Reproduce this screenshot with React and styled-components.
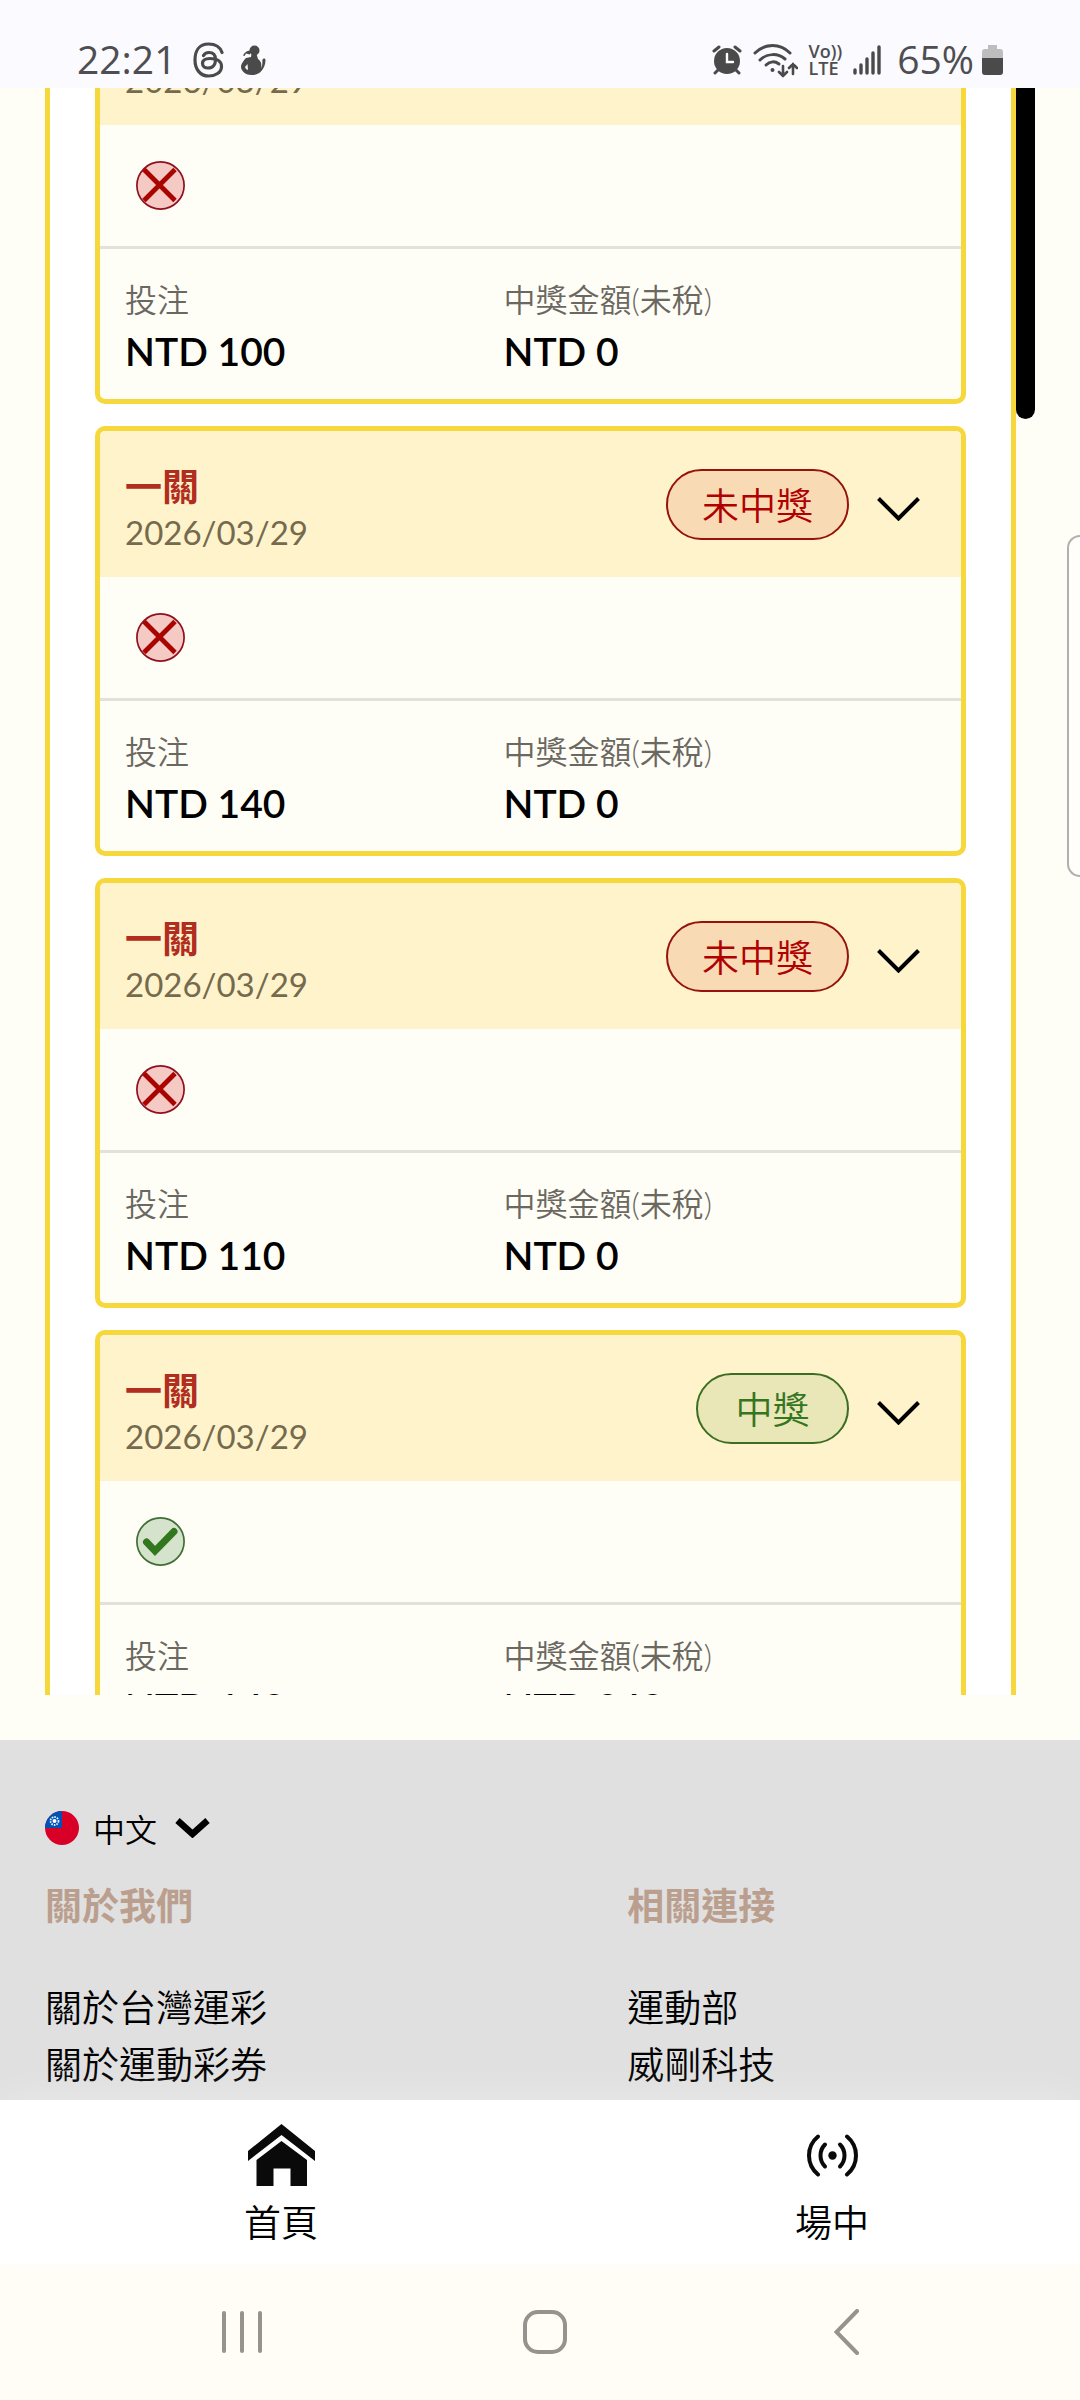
import React, { useLayoutEffect, useRef } from "react";
import styled, { createGlobalStyle } from "styled-components";

const GlobalStyle = createGlobalStyle`
  * { box-sizing: border-box; }
  body {
    margin: 0;
    background: #fffef6;
    color: #000;
    font-family: Lato, "Noto Sans CJK TC", sans-serif;
    font-weight: 400;
  }
  button {
    border: 0;
    padding: 0;
    background: none;
    color: inherit;
    font: inherit;
  }
  a { color: inherit; text-decoration: none; }
  svg { display: block; flex: none; }
`;

const Screen = styled.div`
  position: relative;
  display: flex;
  flex-direction: column;
  height: 100vh;
  overflow: hidden;
`;

/* ---------- status bar ---------- */

const StatusBar = styled.header`
  display: flex;
  justify-content: space-between;
  height: 88px;
  padding: 40px 77px 8px 77px;
  background: #fafaff;
  color: #4e4e50;
  font-family: "Open Sans", sans-serif;
  font-size: 39px;
  font-weight: 400;
  line-height: 40px;
`;

const StatusGroup = styled.div`
  display: flex;
  align-items: center;
  gap: ${(p) => p.$gap}px;
`;

const StatusText = styled.span`
  padding-bottom: 2px;
`;

const VoLte = styled.span`
  display: flex;
  flex-direction: column;
  font-size: 18px;
  font-weight: 600;
  line-height: 17px;
`;

const BatteryLevel = styled.span`
  display: flex;
  align-items: center;
  gap: 8px;
  margin-left: 5px;
`;

/* ---------- bet list ---------- */

const Main = styled.main`
  display: flex;
  flex: 1;
  min-height: 0;
  padding: 0 45px 45px;
`;

const Scroller = styled.div`
  flex: 1;
  overflow: hidden;
`;

const Frame = styled.div`
  display: flex;
  flex-direction: column;
  gap: 22px;
  padding: 45px;
  border: 5px solid #f6d73c;
  background: #fff;
`;

const Track = styled.div`
  width: 19px;
`;

const Thumb = styled.div`
  height: 331px;
  border-radius: 0 0 10px 10px;
  background: #000;
`;

const Card = styled.article`
  border: 5px solid #f6d73c;
  border-radius: 10px;
  background: #fffef6;
  overflow: hidden;
`;

const CardHeader = styled.div`
  display: flex;
  align-items: center;
  height: 146px;
  padding: 0 41px 0 25px;
  background: #fff3cc;
`;

const CardHeading = styled.div`
  flex: 1;
  padding-top: 10px;
`;

const CardTitle = styled.h2`
  margin: 0;
  color: #b12d20;
  font-size: 37px;
  font-weight: 700;
  line-height: 46px;
`;

const CardDate = styled.div`
  color: #756a4c;
  font-size: 33px;
  line-height: 44px;
`;

const Badge = styled.span`
  min-width: 153px;
  height: 71px;
  padding: 0 34px;
  border: 2px solid ${(p) => (p.$won ? "#3b6e22" : "#96120a")};
  border-radius: 36px;
  background: ${(p) => (p.$won ? "#e9e6b8" : "#f8dab5")};
  color: ${(p) => (p.$won ? "#35751f" : "#b00000")};
  font-size: 37px;
  font-weight: 350;
  line-height: 70px;
  text-align: center;
`;

const ExpandButton = styled.button`
  margin-left: 28px;
  padding-top: 10px;
`;

const ResultRow = styled.div`
  display: flex;
  align-items: center;
  height: 121px;
  padding: 0 36px;
`;

const Amounts = styled.dl`
  display: grid;
  grid-template-columns: 7fr 8fr;
  margin: 0;
  height: 153px;
  padding: 27px 25px 0;
  border-top: 3px solid #e4e1db;
`;

const AmountLabel = styled.dt`
  color: #6b6862;
  font-size: 32px;
  font-weight: 350;
  line-height: 48px;
`;

const AmountValue = styled.dd`
  margin: 0;
  font-size: 39px;
  font-weight: 600;
  line-height: 54px;
`;

/* ---------- footer ---------- */

const Footer = styled.footer`
  height: 360px;
  padding: 64px 0 0 45px;
  background: #e0e0e0;
  overflow: hidden;
`;

const LanguageButton = styled.button`
  display: flex;
  align-items: center;
  height: 48px;
  font-size: 32px;
  font-weight: 350;
  line-height: 48px;
`;

const LanguageName = styled.span`
  margin: 0 18px 0 14px;
  padding-top: 3px;
`;

const FooterColumns = styled.div`
  display: grid;
  grid-template-columns: 9fr 7fr;
  padding-top: 25px;
`;

const FooterTitle = styled.h3`
  margin: 0 0 45px;
  color: #bb9f8e;
  font-size: 37px;
  font-weight: 700;
  line-height: 57px;
`;

const FooterLink = styled.a`
  display: block;
  font-size: 37px;
  font-weight: 350;
  line-height: 57px;
`;

/* ---------- bottom bars ---------- */

const TabBar = styled.nav`
  display: flex;
  justify-content: space-between;
  height: 164px;
  padding: 18px 211px 0 244px;
  background: #fff;
  box-shadow: 0 0 40px rgba(255, 255, 255, 0.35);
  z-index: 1;
`;

const Tab = styled.a`
  display: flex;
  flex-direction: column;
  align-items: center;
  gap: 4px;
  font-size: 37px;
  font-weight: 350;
  line-height: 54px;
`;

const TabIcon = styled.span`
  display: flex;
  align-items: center;
  height: 74px;
`;

const SystemBar = styled.nav`
  display: flex;
  align-items: center;
  justify-content: space-between;
  height: 136px;
  padding: 0 203px 0 212px;
  background: #fffdf6;
`;

const SystemButton = styled.button`
  display: flex;
  align-items: center;
  justify-content: center;
  width: 60px;
  height: 60px;
`;

const EdgeHandle = styled.div`
  position: absolute;
  top: 535px;
  right: 0;
  width: 13px;
  height: 342px;
  border: 2px solid #b0b0ae;
  border-right: 0;
  border-radius: 14px 0 0 14px;
  background: #fffefa;
`;

/* ---------- drawings ---------- */

const ThreadsIcon = () => (
  <svg width="31" height="36" viewBox="0 0 31 36" fill="none" stroke="#4a4a4b" strokeWidth="3.200" strokeLinecap="round">
    <path d="M29 10.500C27 4.500 21.500 2 15.500 2 6 2 2 9 2 18s5 16 13.500 16c7 0 13-3.500 13-9.500 0-6-6-8-11.500-8-5 0-7.500 2-7.500 5 0 3 2.500 4.500 5.500 4.500 5 0 7.500-3.500 7.500-8.500 0-4.500-2.500-7-6.500-7-3 0-4.500 1-5.500 3" />
  </svg>
);

const FigureIcon = () => (
  <svg width="25" height="31" viewBox="0 0 25 31" fill="#4a4a4b">
    <circle cx="13.500" cy="5.500" r="5" />
    <path d="M10.500 9h5l1.500 5c3 2 4 5 3 9 2-2 1-6 1.500-8.500 1-1.500 3-1 3 .500 0 5-2 9-5 12-4 4-14 4-17 0-1.500-2-2.500-3-2.500-5 0-3 3-7 5-9l5-1z" />
    <path d="M2 10.500c2-4 5-5 8-5l-1 4-4-1-1.500 2.500z" />
    <path d="M4 22l2.500-3 .500 6-2-1z" fill="#fafaff" />
  </svg>
);

const AlarmIcon = () => (
  <svg width="30" height="30" viewBox="0 0 30 30" fill="none" stroke="#4a4a4b" strokeLinecap="round">
    <circle cx="15" cy="16" r="13" fill="#4a4a4b" stroke="none" />
    <path d="M2 6l5-4M28 6l-5-4M6 25l-3 3M24 25l3 3" strokeWidth="3" />
    <path d="M15 9v8h6" stroke="#fff" strokeWidth="2.400" />
  </svg>
);

const WifiIcon = () => (
  <svg width="45" height="35" viewBox="0 0 45 35" fill="none" stroke="#4a4a4b" strokeWidth="3" strokeLinecap="round">
    <path d="M2 10C12 0 27 0 37 10" />
    <path d="M7 17c7-7 18-7 25-1" />
    <path d="M13 22c4-4 9-4 13-1" />
    <circle cx="19.500" cy="27" r="2" fill="#4a4a4b" stroke="none" />
    <path d="M30 23v10M26 29l4 4 4-4M40 31V21M36 25l4-4 4 4" strokeWidth="2.600" />
  </svg>
);

const SignalIcon = () => (
  <svg width="28" height="30" viewBox="0 0 28 30" stroke="#4a4a4b" strokeWidth="3.400" strokeLinecap="round">
    <path d="M2 25v3M8 20v8M14 14v14M20 8v20M26 2v26" />
  </svg>
);

const BatteryIcon = () => (
  <svg width="21" height="32" viewBox="0 0 21 32">
    <path d="M6 1h9v4h3a3 3 0 0 1 3 3v7H0V8a3 3 0 0 1 3-3h3z" fill="#bdbdbf" />
    <path d="M0 14h21v14a3 3 0 0 1-3 3H3a3 3 0 0 1-3-3z" fill="#4a4a4b" />
  </svg>
);

const CrossMark = () => (
  <svg width="49" height="49" viewBox="0 0 49 49" role="img" aria-label="未中獎">
    <circle cx="24.500" cy="24.500" r="23.600" fill="#f5c9c4" stroke="#8f1020" strokeWidth="1.700" />
    <path d="M8 8.500l31 31M39 8.500L8 39.500" stroke="#a90400" strokeWidth="4.800" />
  </svg>
);

const CheckMark = () => (
  <svg width="49" height="49" viewBox="0 0 49 49" role="img" aria-label="中獎">
    <circle cx="24.500" cy="24.500" r="23.600" fill="#d5e2cc" stroke="#3f6f35" strokeWidth="1.700" />
    <path d="M10.500 25L19 34L38 14.500" fill="none" stroke="#32761d" strokeWidth="7" strokeLinecap="round" />
  </svg>
);

const ThinChevron = () => (
  <svg width="43" height="24" viewBox="0 0 43 24" fill="none" stroke="#000" strokeWidth="4">
    <path d="M1.500 1.500l20 20 20-20" />
  </svg>
);

const BoldChevron = () => (
  <svg width="35" height="20" viewBox="0 0 35 20" fill="none" stroke="#000" strokeWidth="6.500">
    <path d="M2.500 2.500L17.500 16l15-13.500" />
  </svg>
);

const FlagIcon = () => (
  <svg width="34" height="34" viewBox="0 0 34 34">
    <circle cx="17" cy="17" r="17" fill="#d80027" />
    <path d="M17 0A17 17 0 0 0 0 17h17z" fill="#0052b4" />
    <circle cx="9.500" cy="10" r="4" fill="none" stroke="#e8eefb" strokeWidth="1.800" strokeDasharray="1.600 1" />
    <circle cx="9.500" cy="10" r="2" fill="#fff" />
  </svg>
);

const HomeIcon = () => (
  <svg width="67" height="62" viewBox="0 0 67 62" fill="#0a0a0a">
    <path d="M33.500 0L67 27v10L33.500 11 0 37V27z" />
    <path d="M33.500 17L59 36v26H42.500V44.500h-17V62H8.500V36z" />
  </svg>
);

const LiveIcon = () => (
  <svg width="51" height="43" viewBox="0 0 51 43" fill="none" stroke="#0a0a0a" strokeWidth="4" strokeLinecap="round">
    <circle cx="25.500" cy="21.500" r="4.200" fill="#0a0a0a" stroke="none" />
    <path d="M18 10.500c-6 6-6 16 0 22M33 10.500c6 6 6 16 0 22" />
    <path d="M11 2.500c-12 10-12 28 0 38M40 2.500c12 10 12 28 0 38" />
  </svg>
);

const RecentsIcon = () => (
  <svg width="40" height="44" viewBox="0 0 40 44" stroke="#94938d" strokeWidth="4" strokeLinecap="round">
    <path d="M2 3v38M20 3v38M38 3v38" />
  </svg>
);

const HomeKeyIcon = () => (
  <svg width="44" height="44" viewBox="0 0 44 44" fill="none" stroke="#94938d" strokeWidth="4">
    <rect x="2" y="2" width="40" height="40" rx="13" />
  </svg>
);

const BackIcon = () => (
  <svg width="26" height="46" viewBox="0 0 26 46" fill="none" stroke="#94938d" strokeWidth="4" strokeLinecap="round">
    <path d="M23 2L2.500 23 23 44" />
  </svg>
);

/* ---------- data ---------- */

const BETS = [
  { id: 1, date: "2026/03/29", stake: 100, payout: 0, won: false },
  { id: 2, date: "2026/03/29", stake: 140, payout: 0, won: false },
  { id: 3, date: "2026/03/29", stake: 110, payout: 0, won: false },
  { id: 4, date: "2026/03/29", stake: 140, payout: 240, won: true },
];

const FOOTER_COLUMNS = [
  { title: "關於我們", links: ["關於台灣運彩", "關於運動彩券"] },
  { title: "相關連接", links: ["運動部", "威剛科技"] },
];

const INITIAL_SCROLL = 164;

function BetCard({ bet }) {
  return (
    <Card>
      <CardHeader>
        <CardHeading>
          <CardTitle>一關</CardTitle>
          <CardDate>{bet.date}</CardDate>
        </CardHeading>
        <Badge $won={bet.won}>{bet.won ? "中獎" : "未中獎"}</Badge>
        <ExpandButton aria-label="展開">
          <ThinChevron />
        </ExpandButton>
      </CardHeader>
      <ResultRow>{bet.won ? <CheckMark /> : <CrossMark />}</ResultRow>
      <Amounts>
        <div>
          <AmountLabel>投注</AmountLabel>
          <AmountValue>NTD {bet.stake}</AmountValue>
        </div>
        <div>
          <AmountLabel>中獎金額(未稅)</AmountLabel>
          <AmountValue>NTD {bet.payout}</AmountValue>
        </div>
      </Amounts>
    </Card>
  );
}

export default function App() {
  const scroller = useRef(null);

  useLayoutEffect(() => {
    scroller.current.scrollTop = INITIAL_SCROLL;
  }, []);

  return (
    <Screen>
      <GlobalStyle />
      <StatusBar>
        <StatusGroup $gap={17}>
          <StatusText>22:21</StatusText>
          <ThreadsIcon />
          <FigureIcon />
        </StatusGroup>
        <StatusGroup $gap={11}>
          <AlarmIcon />
          <WifiIcon />
          <VoLte>
            <span>Vo))</span>
            <span>LTE</span>
          </VoLte>
          <SignalIcon />
          <BatteryLevel>
            <StatusText>65%</StatusText>
            <BatteryIcon />
          </BatteryLevel>
        </StatusGroup>
      </StatusBar>

      <Main>
        <Scroller ref={scroller}>
          <Frame>
            {BETS.map((bet) => (
              <BetCard key={bet.id} bet={bet} />
            ))}
          </Frame>
        </Scroller>
        <Track>
          <Thumb />
        </Track>
      </Main>

      <Footer>
        <LanguageButton>
          <FlagIcon />
          <LanguageName>中文</LanguageName>
          <BoldChevron />
        </LanguageButton>
        <FooterColumns>
          {FOOTER_COLUMNS.map((column) => (
            <div key={column.title}>
              <FooterTitle>{column.title}</FooterTitle>
              {column.links.map((link) => (
                <FooterLink key={link} href="#">
                  {link}
                </FooterLink>
              ))}
            </div>
          ))}
        </FooterColumns>
      </Footer>

      <TabBar>
        <Tab href="#">
          <TabIcon>
            <HomeIcon />
          </TabIcon>
          首頁
        </Tab>
        <Tab href="#">
          <TabIcon>
            <LiveIcon />
          </TabIcon>
          場中
        </Tab>
      </TabBar>

      <SystemBar>
        <SystemButton aria-label="最近使用">
          <RecentsIcon />
        </SystemButton>
        <SystemButton aria-label="主畫面">
          <HomeKeyIcon />
        </SystemButton>
        <SystemButton aria-label="返回">
          <BackIcon />
        </SystemButton>
      </SystemBar>

      <EdgeHandle />
    </Screen>
  );
}
